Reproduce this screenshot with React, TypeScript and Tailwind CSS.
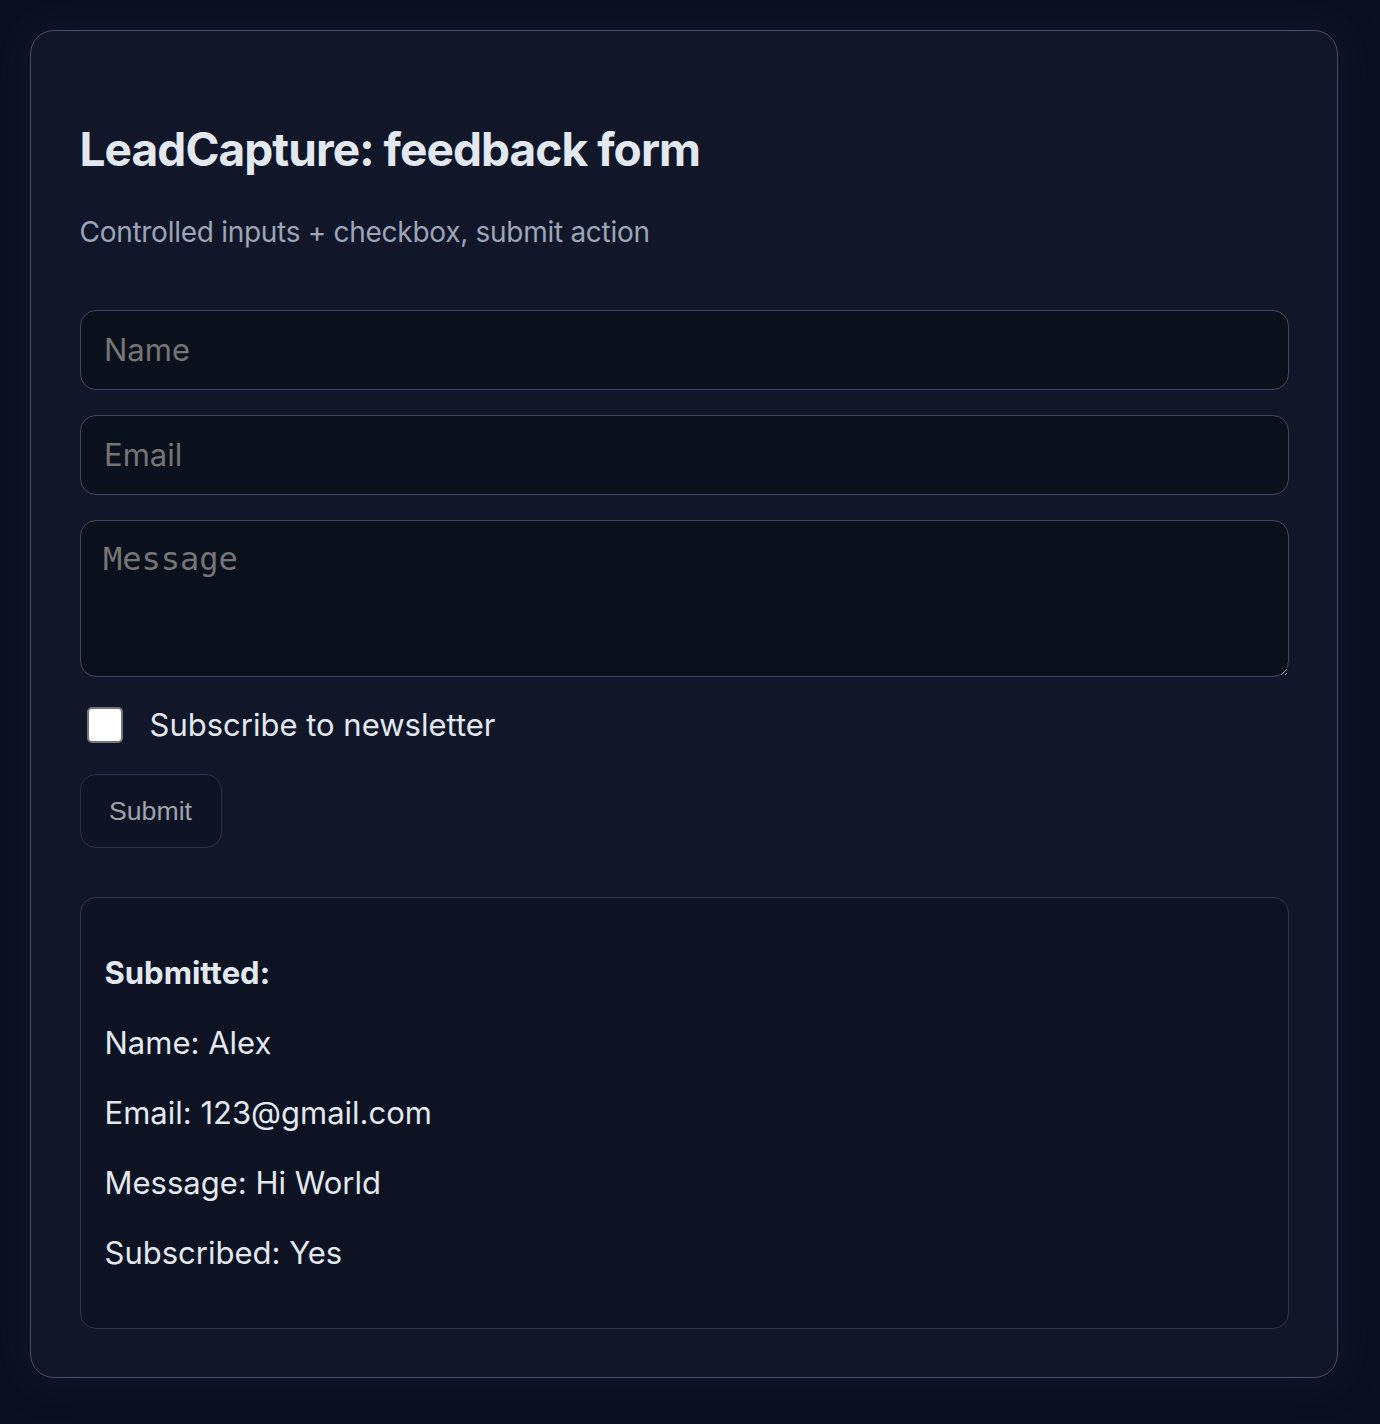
import { useState } from "react";

interface Submission {
  name: string;
  email: string;
  message: string;
  subscribed: boolean;
}

const App = () => {
  const [name, setName] = useState("");
  const [email, setEmail] = useState("");
  const [message, setMessage] = useState("");
  const [subscribed, setSubscribed] = useState(false);
  const [submitted, setSubmitted] = useState<Submission | null>({
    name: "Alex",
    email: "123@gmail.com",
    message: "Hi World",
    subscribed: true,
  });

  const handleSubmit = (e: React.FormEvent) => {
    e.preventDefault();
    setSubmitted({ name, email, message, subscribed });
  };

  return (
    <div className="min-h-[1424px] bg-[#0b1020] p-[30px] font-['Inter','Liberation_Sans',sans-serif]">
      <div className="w-[1308px] rounded-[24px] border-[1.5px] border-[#454e62] bg-[#111729] px-[48.5px] pb-[48.5px] pt-[85.5px] shadow-[0_0_40px_rgba(30,40,60,0.35)]">
        <h1 className="text-[46px] font-bold leading-[64px] tracking-[-0.02em] text-[#e2e8f0]">
          LeadCapture: feedback form
        </h1>
        <p className="mt-[31px] text-[28px] leading-[40px] tracking-[-0.01em] text-[#9ba5b7]">
          Controlled inputs + checkbox, submit action
        </p>

        <form onSubmit={handleSubmit} className="mt-[58px] flex flex-col">
          <input
            value={name}
            onChange={(e) => setName(e.target.value)}
            placeholder="Name"
            className="h-[80px] rounded-[16px] border-[1.5px] border-[#3f485b] bg-[#0b101d] px-[23.5px] text-[31px] text-[#e2e8f0] outline-none placeholder:text-[#757575]"
          />
          <input
            value={email}
            onChange={(e) => setEmail(e.target.value)}
            placeholder="Email"
            className="mt-[25px] h-[80px] rounded-[16px] border-[1.5px] border-[#3f485b] bg-[#0b101d] px-[23.5px] text-[31px] text-[#e2e8f0] outline-none placeholder:text-[#757575]"
          />
          <textarea
            value={message}
            onChange={(e) => setMessage(e.target.value)}
            placeholder="Message"
            className="mt-[25px] h-[157px] rounded-[16px] border-[1.5px] border-[#3f485b] bg-[#0b101d] px-[22.5px] py-[18.5px] font-['DejaVu_Sans_Mono',monospace] text-[32px] leading-[40px] text-[#e2e8f0] outline-none [color-scheme:dark] placeholder:text-[#757575]"
          />

          <label className="mt-[29px] flex h-[38px] items-center">
            <input
              type="checkbox"
              checked={subscribed}
              onChange={(e) => setSubscribed(e.target.checked)}
              className="ml-[7px] h-[36px] w-[36px] appearance-none rounded-[5px] border-2 border-[#767676] bg-white"
            />
            <span className="ml-[27px] text-[31px] leading-[38px] text-[#e2e8f0]">
              Subscribe to newsletter
            </span>
          </label>

          <button
            type="submit"
            className="mt-[30px] h-[74px] w-[142px] rounded-[16px] border-[1.5px] border-[#2a3142] bg-[#0e1424] font-['Liberation_Sans',Arial,sans-serif] text-[26.67px] text-[#9ca3af]"
          >
            Submit
          </button>
        </form>

        {submitted && (
          <div className="mt-[49px] flex flex-col gap-[32px] rounded-[16px] border-[1.5px] border-[#2e3648] bg-[#0d1322] px-[24px] py-[56px] text-[31px] leading-[38px] text-[#e2e8f0]">
            <p className="font-bold">Submitted:</p>
            <p>Name: {submitted.name}</p>
            <p>Email: {submitted.email}</p>
            <p>Message: {submitted.message}</p>
            <p>Subscribed: {submitted.subscribed ? "Yes" : "No"}</p>
          </div>
        )}
      </div>
    </div>
  );
};

export default App;
